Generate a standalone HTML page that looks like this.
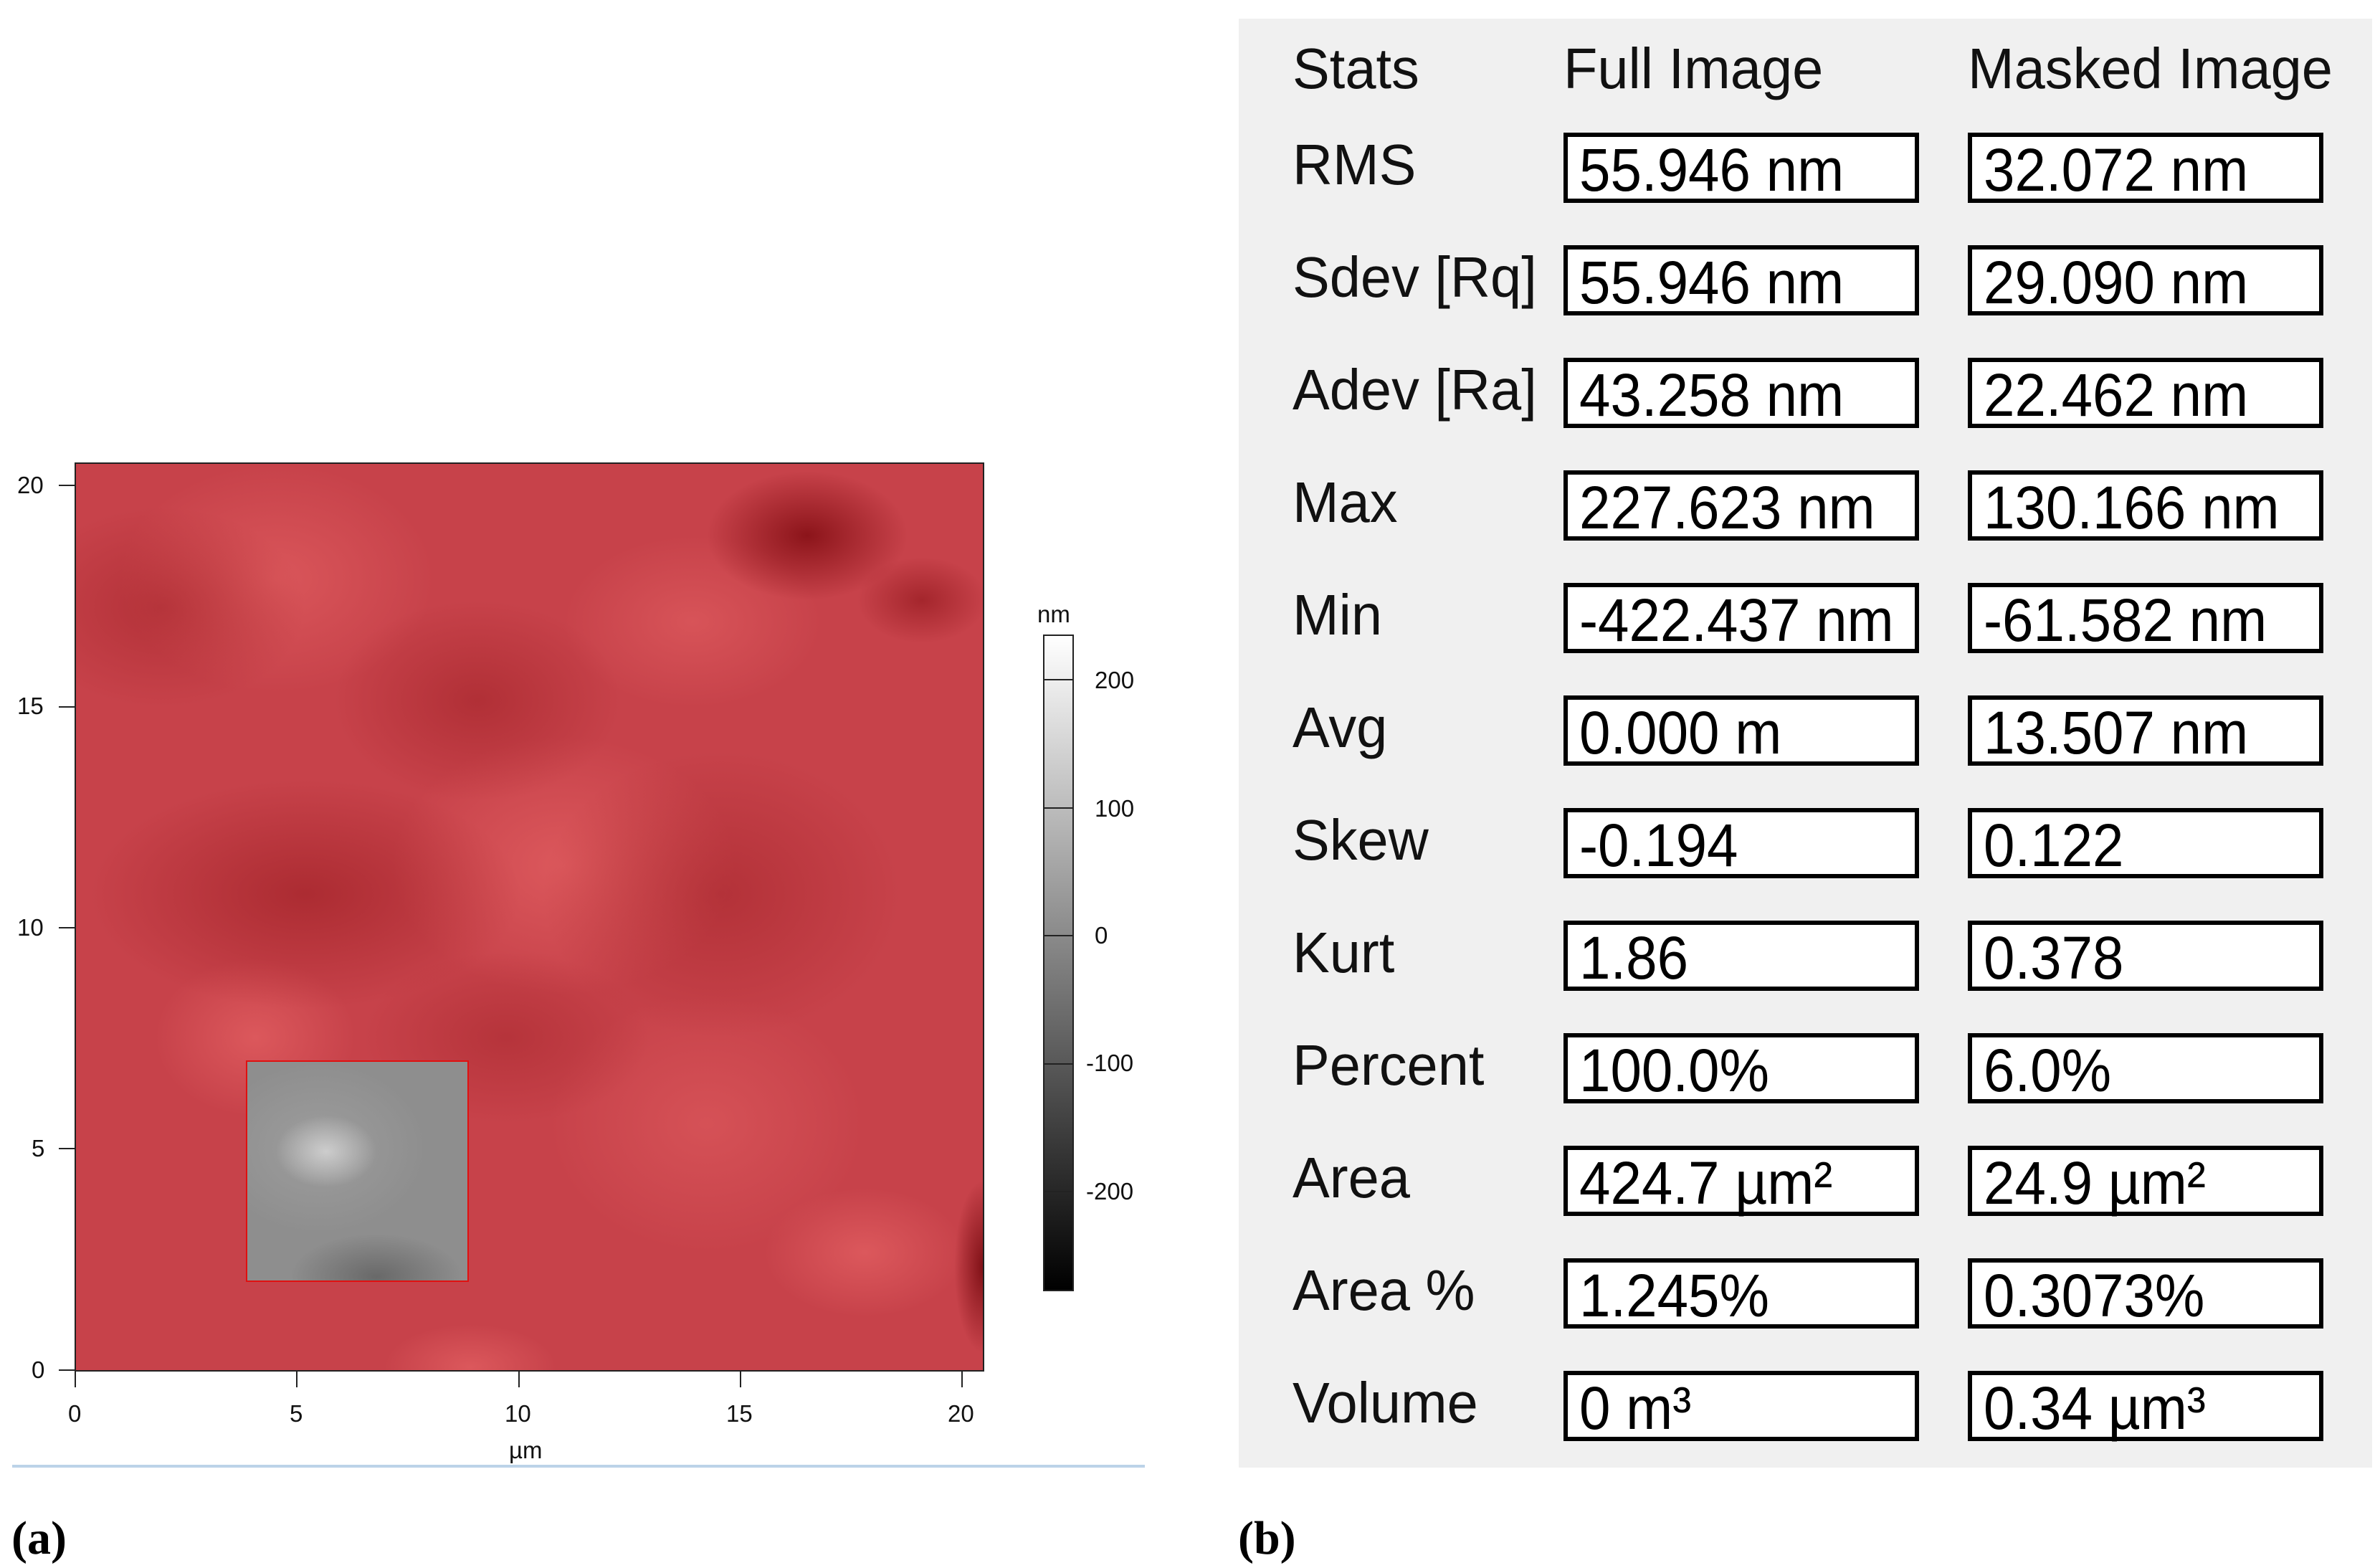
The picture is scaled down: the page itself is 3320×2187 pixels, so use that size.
<!DOCTYPE html>
<html><head><meta charset="utf-8"><style>
*{margin:0;padding:0;box-sizing:border-box}
body{width:3320px;height:2187px;background:#fff;position:relative;overflow:hidden;font-family:"Liberation Sans",sans-serif}
.a{position:absolute}
.ax{position:absolute;font-size:33px;color:#111;line-height:1}
.lbl{position:absolute;left:1803px;font-size:80px;color:#111;line-height:1;transform:scaleX(.97);transform-origin:left center;white-space:nowrap}
.box{position:absolute;width:496px;height:98px;border:6px solid #000;background:#fff;font-size:84px;line-height:84px;padding-left:16px;padding-top:4px;white-space:nowrap;color:#000}
.box span{display:inline-block;transform:scaleX(.93);transform-origin:left center}
</style></head><body>
<div class="a" style="left:104px;top:645px;width:1269px;height:1268px;border:2px solid #222;background:
radial-gradient(ellipse 140px 90px at 1020px 100px,rgba(120,5,10,.75),transparent),
radial-gradient(ellipse 90px 60px at 1180px 190px,rgba(130,10,15,.5),transparent),
radial-gradient(ellipse 300px 160px at 320px 600px,rgba(150,25,30,.55),transparent),
radial-gradient(ellipse 200px 140px at 560px 330px,rgba(150,25,30,.45),transparent),
radial-gradient(ellipse 200px 140px at 120px 200px,rgba(150,25,30,.4),transparent),
radial-gradient(ellipse 250px 200px at 900px 600px,rgba(150,25,30,.4),transparent),
radial-gradient(ellipse 200px 120px at 600px 800px,rgba(150,25,30,.35),transparent),
radial-gradient(ellipse 220px 160px at 280px 160px,rgba(240,110,110,.45),transparent),
radial-gradient(ellipse 180px 120px at 860px 220px,rgba(240,110,110,.4),transparent),
radial-gradient(ellipse 240px 180px at 680px 560px,rgba(240,110,110,.5),transparent),
radial-gradient(ellipse 140px 110px at 250px 800px,rgba(240,110,110,.5),transparent),
radial-gradient(ellipse 140px 90px at 1100px 1100px,rgba(240,110,110,.5),transparent),
radial-gradient(ellipse 220px 180px at 880px 920px,rgba(240,110,110,.35),transparent),
radial-gradient(ellipse 120px 60px at 550px 1260px,rgba(240,110,110,.5),transparent),
radial-gradient(ellipse 40px 120px at 1265px 1120px,rgba(110,5,10,.8),transparent),
#c7424a"></div>
<div class="a" style="left:343px;top:1479px;width:311px;height:309px;border:2px solid #e01010;background:
radial-gradient(ellipse 70px 50px at 110px 125px,rgba(225,225,225,.7),transparent),
radial-gradient(ellipse 150px 120px at 100px 120px,rgba(180,180,180,.4),transparent),
radial-gradient(ellipse 120px 60px at 180px 300px,rgba(80,80,80,.6),transparent),
#8e8e8e"></div>
<div class="ax" style="left:24px;top:660px">20</div>
<div class="ax" style="left:24px;top:968px">15</div>
<div class="ax" style="left:24px;top:1277px">10</div>
<div class="ax" style="left:44px;top:1585px">5</div>
<div class="ax" style="left:44px;top:1894px">0</div>
<div class="a" style="left:82px;top:676px;width:22px;height:2px;background:#222"></div>
<div class="a" style="left:82px;top:985px;width:22px;height:2px;background:#222"></div>
<div class="a" style="left:82px;top:1293px;width:22px;height:2px;background:#222"></div>
<div class="a" style="left:82px;top:1601px;width:22px;height:2px;background:#222"></div>
<div class="a" style="left:82px;top:1910px;width:22px;height:2px;background:#222"></div>
<div class="a" style="left:104px;top:1913px;width:2px;height:22px;background:#222"></div>
<div class="a" style="left:413px;top:1913px;width:2px;height:22px;background:#222"></div>
<div class="a" style="left:723px;top:1913px;width:2px;height:22px;background:#222"></div>
<div class="a" style="left:1032px;top:1913px;width:2px;height:22px;background:#222"></div>
<div class="a" style="left:1341px;top:1913px;width:2px;height:22px;background:#222"></div>
<div class="ax" style="left:95px;top:1955px">0</div>
<div class="ax" style="left:404px;top:1955px">5</div>
<div class="ax" style="left:704px;top:1955px">10</div>
<div class="ax" style="left:1013px;top:1955px">15</div>
<div class="ax" style="left:1322px;top:1955px">20</div>
<div class="ax" style="left:710px;top:2006px">µm</div>
<div class="ax" style="left:1447px;top:840px">nm</div>
<div class="a" style="left:1455px;top:885px;width:43px;height:916px;border:2px solid #222;background:linear-gradient(#fff,#000)">
<div class="a" style="left:0;right:0;top:60px;height:2px;background:#222"></div>
<div class="a" style="left:0;right:0;top:239px;height:2px;background:#222"></div>
<div class="a" style="left:0;right:0;top:417px;height:2px;background:#222"></div>
<div class="a" style="left:0;right:0;top:596px;height:2px;background:#222"></div>
<div class="a" style="left:0;right:0;top:774px;height:2px;background:#222"></div>
</div>
<div class="ax" style="left:1527px;top:932px">200</div>
<div class="ax" style="left:1527px;top:1111px">100</div>
<div class="ax" style="left:1527px;top:1288px">0</div>
<div class="ax" style="left:1515px;top:1466px">-100</div>
<div class="ax" style="left:1515px;top:1645px">-200</div>
<div class="a" style="left:17px;top:2043px;width:1580px;height:4px;background:#bcd3e8"></div>
<div class="a" style="left:16px;top:2108px;font-family:'Liberation Serif',serif;font-weight:bold;font-size:66px">(a)</div>
<div class="a" style="left:1727px;top:2108px;font-family:'Liberation Serif',serif;font-weight:bold;font-size:66px">(b)</div>
<div class="a" style="left:1728px;top:26px;width:1581px;height:2021px;background:#f0f0f0"></div>
<div class="lbl" style="top:56px">Stats</div>
<div class="lbl" style="top:56px;left:2181px">Full Image</div>
<div class="lbl" style="top:56px;left:2745px">Masked Image</div>

<div class="lbl" style="top:190px">RMS</div>
<div class="box" style="left:2181px;top:185px"><span>55.946 nm</span></div>
<div class="box" style="left:2745px;top:185px"><span>32.072 nm</span></div>

<div class="lbl" style="top:347px">Sdev [Rq]</div>
<div class="box" style="left:2181px;top:342px"><span>55.946 nm</span></div>
<div class="box" style="left:2745px;top:342px"><span>29.090 nm</span></div>

<div class="lbl" style="top:504px">Adev [Ra]</div>
<div class="box" style="left:2181px;top:499px"><span>43.258 nm</span></div>
<div class="box" style="left:2745px;top:499px"><span>22.462 nm</span></div>

<div class="lbl" style="top:661px">Max</div>
<div class="box" style="left:2181px;top:656px"><span>227.623 nm</span></div>
<div class="box" style="left:2745px;top:656px"><span>130.166 nm</span></div>

<div class="lbl" style="top:818px">Min</div>
<div class="box" style="left:2181px;top:813px"><span>-422.437 nm</span></div>
<div class="box" style="left:2745px;top:813px"><span>-61.582 nm</span></div>

<div class="lbl" style="top:975px">Avg</div>
<div class="box" style="left:2181px;top:970px"><span>0.000 m</span></div>
<div class="box" style="left:2745px;top:970px"><span>13.507 nm</span></div>

<div class="lbl" style="top:1132px">Skew</div>
<div class="box" style="left:2181px;top:1127px"><span>-0.194</span></div>
<div class="box" style="left:2745px;top:1127px"><span>0.122</span></div>

<div class="lbl" style="top:1289px">Kurt</div>
<div class="box" style="left:2181px;top:1284px"><span>1.86</span></div>
<div class="box" style="left:2745px;top:1284px"><span>0.378</span></div>

<div class="lbl" style="top:1446px">Percent</div>
<div class="box" style="left:2181px;top:1441px"><span>100.0%</span></div>
<div class="box" style="left:2745px;top:1441px"><span>6.0%</span></div>

<div class="lbl" style="top:1603px">Area</div>
<div class="box" style="left:2181px;top:1598px"><span>424.7 µm²</span></div>
<div class="box" style="left:2745px;top:1598px"><span>24.9 µm²</span></div>

<div class="lbl" style="top:1760px">Area %</div>
<div class="box" style="left:2181px;top:1755px"><span>1.245%</span></div>
<div class="box" style="left:2745px;top:1755px"><span>0.3073%</span></div>

<div class="lbl" style="top:1917px">Volume</div>
<div class="box" style="left:2181px;top:1912px"><span>0 m³</span></div>
<div class="box" style="left:2745px;top:1912px"><span>0.34 µm³</span></div>
</body></html>
